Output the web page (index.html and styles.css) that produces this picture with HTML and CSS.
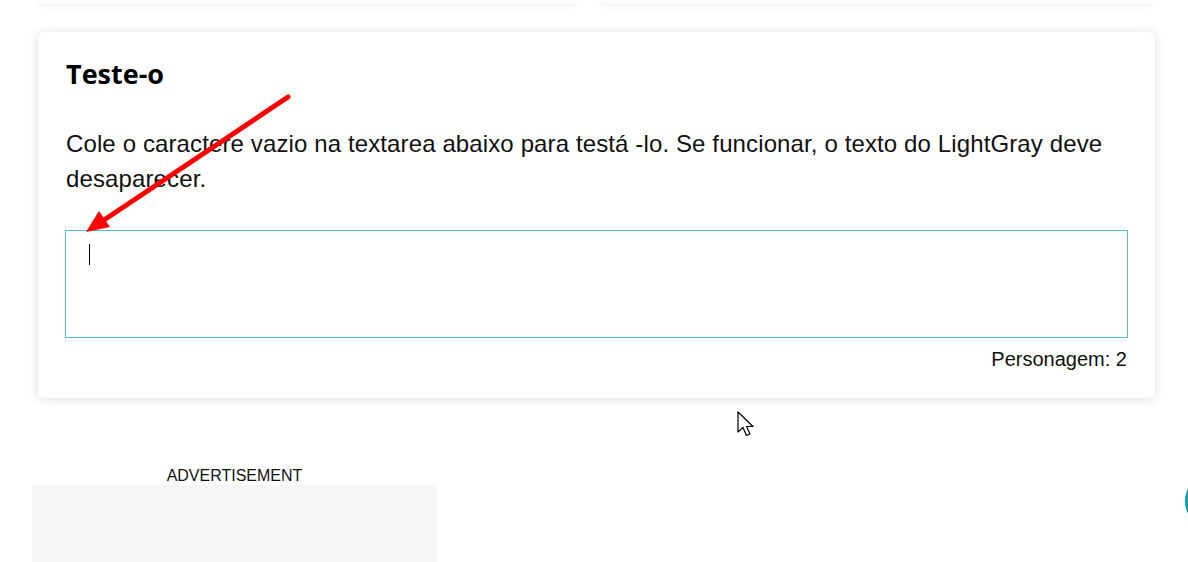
FILE: index.html
```html
<!DOCTYPE html>
<html lang="pt">
<head>
<meta charset="utf-8">
<title>Teste-o</title>
<link rel="stylesheet" href="styles.css">
</head>
<body>
<div class="page">
  <div class="top-row">
    <div class="top-card"></div>
    <div class="top-card"></div>
  </div>

  <section class="card">
    <h2 class="card-title">Teste-o</h2>
    <p class="card-text">Cole o caractere vazio na textarea abaixo para testá -lo. Se funcionar, o texto do LightGray deve desaparecer.</p>
    <div class="field">
      <textarea class="test-area" aria-label="textarea"></textarea>
      <span class="caret"></span>
    </div>
    <div class="counter">Personagem: 2</div>
  </section>

  <div class="ad">
    <div class="ad-label">ADVERTISEMENT</div>
    <div class="ad-box"></div>
  </div>
</div>

<svg class="red-arrow" width="320" height="260" viewBox="0 0 320 260" aria-hidden="true">
  <line x1="288" y1="97" x2="101" y2="222" stroke="#ff0000" stroke-width="5" stroke-linecap="round"/>
  <polygon points="86,232 110,227 99,211" fill="#ff0000"/>
</svg>

<svg class="pointer" width="22" height="30" viewBox="0 0 22 30" aria-hidden="true">
  <path d="M1 1 L1 21 L6 16.5 L9.5 24.5 L13 23 L9.5 15.5 L16 15.5 Z" fill="#fff" stroke="#000" stroke-width="1.2" stroke-linejoin="round"/>
</svg>

<div class="fab"></div>
</body>
</html>
```

FILE: styles.css
```css
html, body {
  margin: 0;
  padding: 0;
  background: #fff;
  overflow: hidden;
}

body {
  width: 1188px;
  height: 562px;
  position: relative;
  font-family: "Liberation Sans", Arial, sans-serif;
  color: #111;
}

.page {
  padding-left: 38px;
  width: 1117px;
}

.top-row {
  display: grid;
  grid-template-columns: 542px 555px;
  gap: 20px;
  height: 2px;
}

.top-card {
  background: #fff;
  border-radius: 0 0 6px 6px;
  box-shadow: 0 2px 10px rgba(0, 0, 0, 0.14);
}

.card {
  margin-top: 30px;
  background: #fff;
  border-radius: 6px;
  box-shadow: 0 1px 10px rgba(0, 0, 0, 0.14);
  padding: 26px 28px 21px;
}

.card-title {
  margin: 0;
  font-family: "Open Sans", "Liberation Sans", sans-serif;
  font-weight: 700;
  font-size: 27px;
  line-height: 32px;
  color: #000;
}

.card-text {
  margin: 36px 0 0;
  font-size: 24px;
  line-height: 35px;
  letter-spacing: 0.12px;
  color: #111;
}

.field {
  position: relative;
  margin: 34px -1px 0;
}

.test-area {
  display: block;
  box-sizing: border-box;
  width: 100%;
  height: 108px;
  border: 1px solid #4fc3c6;
  border-radius: 0;
  resize: none;
  outline: none;
  padding: 12px 22px;
  font-family: "Liberation Sans", Arial, sans-serif;
  font-size: 18px;
  background: #fff;
}

.caret {
  position: absolute;
  left: 24px;
  top: 14px;
  width: 1px;
  height: 21px;
  background: #000;
}

.counter {
  margin-top: 4px;
  text-align: right;
  font-size: 20px;
  line-height: 35px;
  color: #111;
}

.ad {
  margin-top: 69px;
  margin-left: -6px;
  width: 405px;
}

.ad-label {
  text-align: center;
  font-size: 16px;
  line-height: 18px;
  color: #111;
}

.ad-box {
  height: 77px;
  background: #f6f6f6;
}

.red-arrow {
  position: absolute;
  left: 0;
  top: 0;
}

.pointer {
  position: absolute;
  left: 737px;
  top: 411px;
}

.fab {
  position: absolute;
  left: 1185px;
  top: 473px;
  width: 56px;
  height: 56px;
  border-radius: 50%;
  background: #0e9bb0;
}
```
